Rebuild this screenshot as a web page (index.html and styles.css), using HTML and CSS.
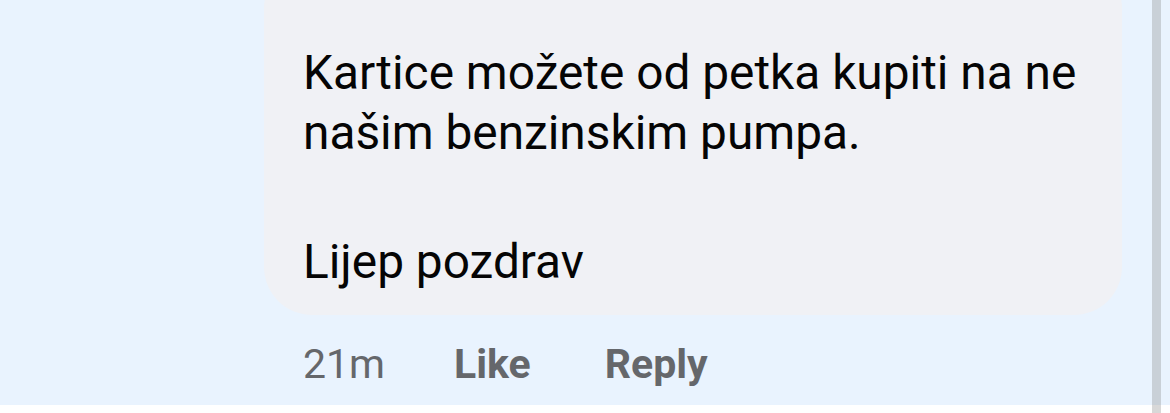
FILE: index.html
```html
<!DOCTYPE html>
<html lang="hr">
<head>
    <meta charset="UTF-8">
    <meta name="viewport" content="width=device-width, initial-scale=1.0">
    <title>Komentar</title>
    <link rel="stylesheet" href="styles.css">
</head>
<body>
    <div class="thread">
        <div class="comment">
            <div class="bubble">
                <p class="text">Kartice možete od petka kupiti na ne našim benzinskim pumpa.</p>
                <p class="text">Lijep pozdrav</p>
            </div>
            <div class="actions">
                <span class="time">21m</span>
                <span class="action">Like</span>
                <span class="action">Reply</span>
            </div>
        </div>
        <div class="scrollbar"></div>
    </div>
</body>
</html>
```

FILE: styles.css
```css
body {
    margin: 0;
    background: #ffffff;
    font-family: Roboto, "Noto Sans", sans-serif;
}

.thread {
    height: 405px;
    background: #e9f3fe;
    overflow: hidden;
    position: relative;
}

.comment {
    padding-left: 264px;
    width: 858px;
}

.bubble {
    margin-top: -40px;
    padding: 83px 30px 23px 39px;
    background: #f0f1f5;
    border-radius: 48px;
}

.text {
    margin: 0;
    font-size: 47.8px;
    line-height: 60px;
    color: #050505;
}

.text + .text {
    margin-top: 69px;
}

.actions {
    display: flex;
    padding: 24px 0 0 39px;
    font-size: 41px;
    line-height: 50px;
    color: #65676b;
}

.action {
    margin-left: 69px;
    font-weight: 700;
}

.action + .action {
    margin-left: 74px;
}

/* overlay scrollbar */
.scrollbar {
    position: fixed;
    top: 0;
    bottom: 0;
    left: 1152px;
    width: 9px;
    background: rgba(133, 133, 133, 0.32);
}
```
